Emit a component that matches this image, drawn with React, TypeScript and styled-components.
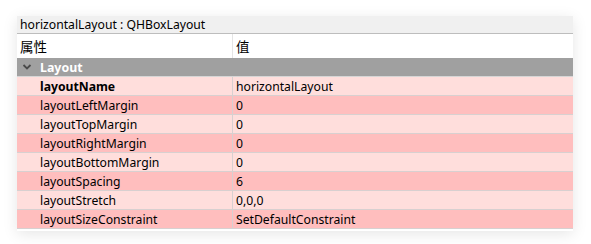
import styled, { createGlobalStyle } from "styled-components";

const Global = createGlobalStyle`
  body {
    margin: 0;
    background: #ffffff;
    font-family: "Noto Sans", "Noto Sans CJK SC", sans-serif;
  }
`;

type Prop = { name: string; value: string; bold?: boolean };

const props: Prop[] = [
  { name: "layoutName", value: "horizontalLayout", bold: true },
  { name: "layoutLeftMargin", value: "0" },
  { name: "layoutTopMargin", value: "0" },
  { name: "layoutRightMargin", value: "0" },
  { name: "layoutBottomMargin", value: "0" },
  { name: "layoutSpacing", value: "6" },
  { name: "layoutStretch", value: "0,0,0" },
  { name: "layoutSizeConstraint", value: "SetDefaultConstraint" },
];

const App = () => {
  return (
    <>
      <Global />
      <Page>
        <Panel>
          <Title>horizontalLayout : QHBoxLayout</Title>
          <HeaderRow>
            <HeadCell>属性</HeadCell>
            <HeadCell>值</HeadCell>
          </HeaderRow>
          <Group>
            <Chevron viewBox="0 0 10 10">
              <path d="M1.5 3 L5 6.5 L8.5 3" fill="none" stroke="#4a4a4a" strokeWidth="1.8" />
            </Chevron>
            <GroupName>Layout</GroupName>
          </Group>
          {props.map((p, i) => (
            <Row key={p.name} dark={i % 2 === 1}>
              <NameCell bold={p.bold}>{p.name}</NameCell>
              <ValueCell>{p.value}</ValueCell>
            </Row>
          ))}
          <Foot />
        </Panel>
      </Page>
    </>
  );
};

export default App;

const Page = styled.div`
  width: 591px;
  height: 244px;
  padding: 16px 0 0 17px;
  box-sizing: border-box;
`;

const Panel = styled.div`
  width: 556px;
  background: #ffffff;
  box-shadow: 0 3px 14px rgba(0, 0, 0, 0.1);
`;

const Title = styled.div`
  height: 17px;
  line-height: 17px;
  padding-left: 3px;
  background: #f0f0f0;
  border-bottom: 1px solid #bdbdbd;
  font-size: 12.2px;
  color: #000;
  white-space: nowrap;
`;

const HeaderRow = styled.div`
  display: grid;
  grid-template-columns: 216px 1fr;
  height: 24px;
  background: #ffffff;
`;

const HeadCell = styled.div`
  display: flex;
  align-items: center;
  padding-left: 3px;
  font-size: 13.5px;
  color: #000;
  &:first-child {
    border-right: 1px solid #e5e5e5;
  }
`;

const Group = styled.div`
  display: flex;
  align-items: center;
  height: 18px;
  background: #a0a0a0;
  border-bottom: 1px solid #d6d6d6;
`;

const Chevron = styled.svg`
  width: 10px;
  height: 10px;
  margin-left: 5px;
  margin-right: 8px;
`;

const GroupName = styled.span`
  font-size: 12.4px;
  font-weight: bold;
  color: #ffffff;
`;

const Row = styled.div<{ dark: boolean }>`
  display: grid;
  grid-template-columns: 216px 1fr;
  height: 18px;
  background: ${({ dark }) => (dark ? "#ffbebe" : "#ffdedc")};
  border-bottom: 1px solid #d8d0d0;
`;

const NameCell = styled.div<{ bold?: boolean }>`
  display: flex;
  align-items: center;
  padding-left: 23px;
  font-size: 12.2px;
  font-weight: ${({ bold }) => (bold ? "bold" : "normal")};
  color: #000;
  border-right: 1px solid #d8d0d0;
`;

const ValueCell = styled.div`
  display: flex;
  align-items: center;
  padding-left: 3px;
  font-size: 12.2px;
  color: #000;
`;

const Foot = styled.div`
  height: 2px;
  background: #ffffff;
`;
